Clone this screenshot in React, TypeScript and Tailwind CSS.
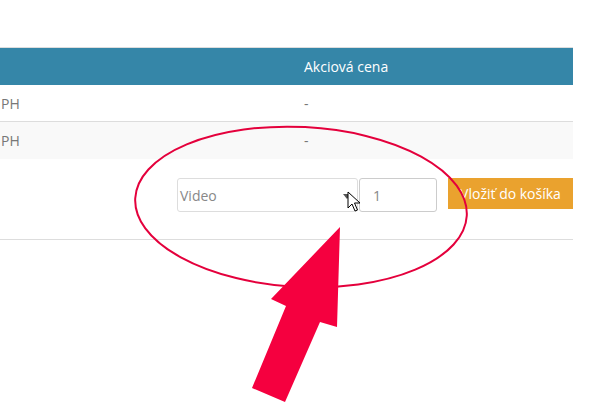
import React from 'react';

const font = { fontFamily: '"Open Sans", "Liberation Sans", sans-serif' };

const Annotation = () => (
  <svg className="absolute inset-0 pointer-events-none" width="604" height="402" viewBox="0 0 604 402">
    <ellipse
      cx="301"
      cy="207"
      rx="166"
      ry="80"
      transform="rotate(3 301 207)"
      fill="none"
      stroke="#e4003c"
      strokeWidth="2"
    />
    <polygon
      points="340,227 337,327 320,322 285,402 252,388 286,306 271,299"
      fill="#f5003f"
    />
  </svg>
);

const Cursor = () => (
  <svg className="absolute left-[347px] top-[191px]" width="14" height="22" viewBox="0 0 14 22">
    <path d="M1 1 L1 17 L5 13 L8 20 L10.5 19 L7.5 12 L13 12 Z" fill="#fff" stroke="#000" strokeWidth="1" strokeLinejoin="round" />
  </svg>
);

export default function App() {
  return (
    <div className="relative w-[604px] h-[402px] bg-white overflow-hidden text-[14px]" style={font}>
      <div className="pt-[47px] w-[573px]">
        <div className="border-t border-[#dddddd]">
          <div className="flex h-[37px] items-center bg-[#3586a8] text-white">
            <div className="w-[304px]" />
            <div>Akciová cena</div>
          </div>
          <div className="flex h-[37px] items-center border-b border-[#dddddd] text-[#777]">
            <div className="w-[304px] pl-px">PH</div>
            <div>-</div>
          </div>
          <div className="flex h-[37px] items-center bg-[#f9f9f9] text-[#777]">
            <div className="w-[304px] pl-px">PH</div>
            <div>-</div>
          </div>
        </div>
        <div className="flex justify-end items-start pt-[19px] h-[81px] border-b border-[#dddddd]">
          <div className="relative w-[181px] h-[34px] border border-[#dddddd] rounded-[3px] flex items-center pl-[2px] text-[#888]">
            Video
            <span className="absolute right-[6px] top-[15px] w-0 h-0 border-l-[4px] border-r-[4px] border-t-[5px] border-l-transparent border-r-transparent border-t-[#555]" />
          </div>
          <div className="ml-px w-[78px] h-[34px] border border-[#cccccc] rounded-[3px] flex items-center pl-[13px] text-[#888]">
            1
          </div>
          <button className="ml-[11px] w-[125px] h-[31px] bg-[#eaa22e] text-white flex items-center justify-center">
            Vložiť do košíka
          </button>
        </div>
      </div>
      <Annotation />
      <Cursor />
    </div>
  );
}
